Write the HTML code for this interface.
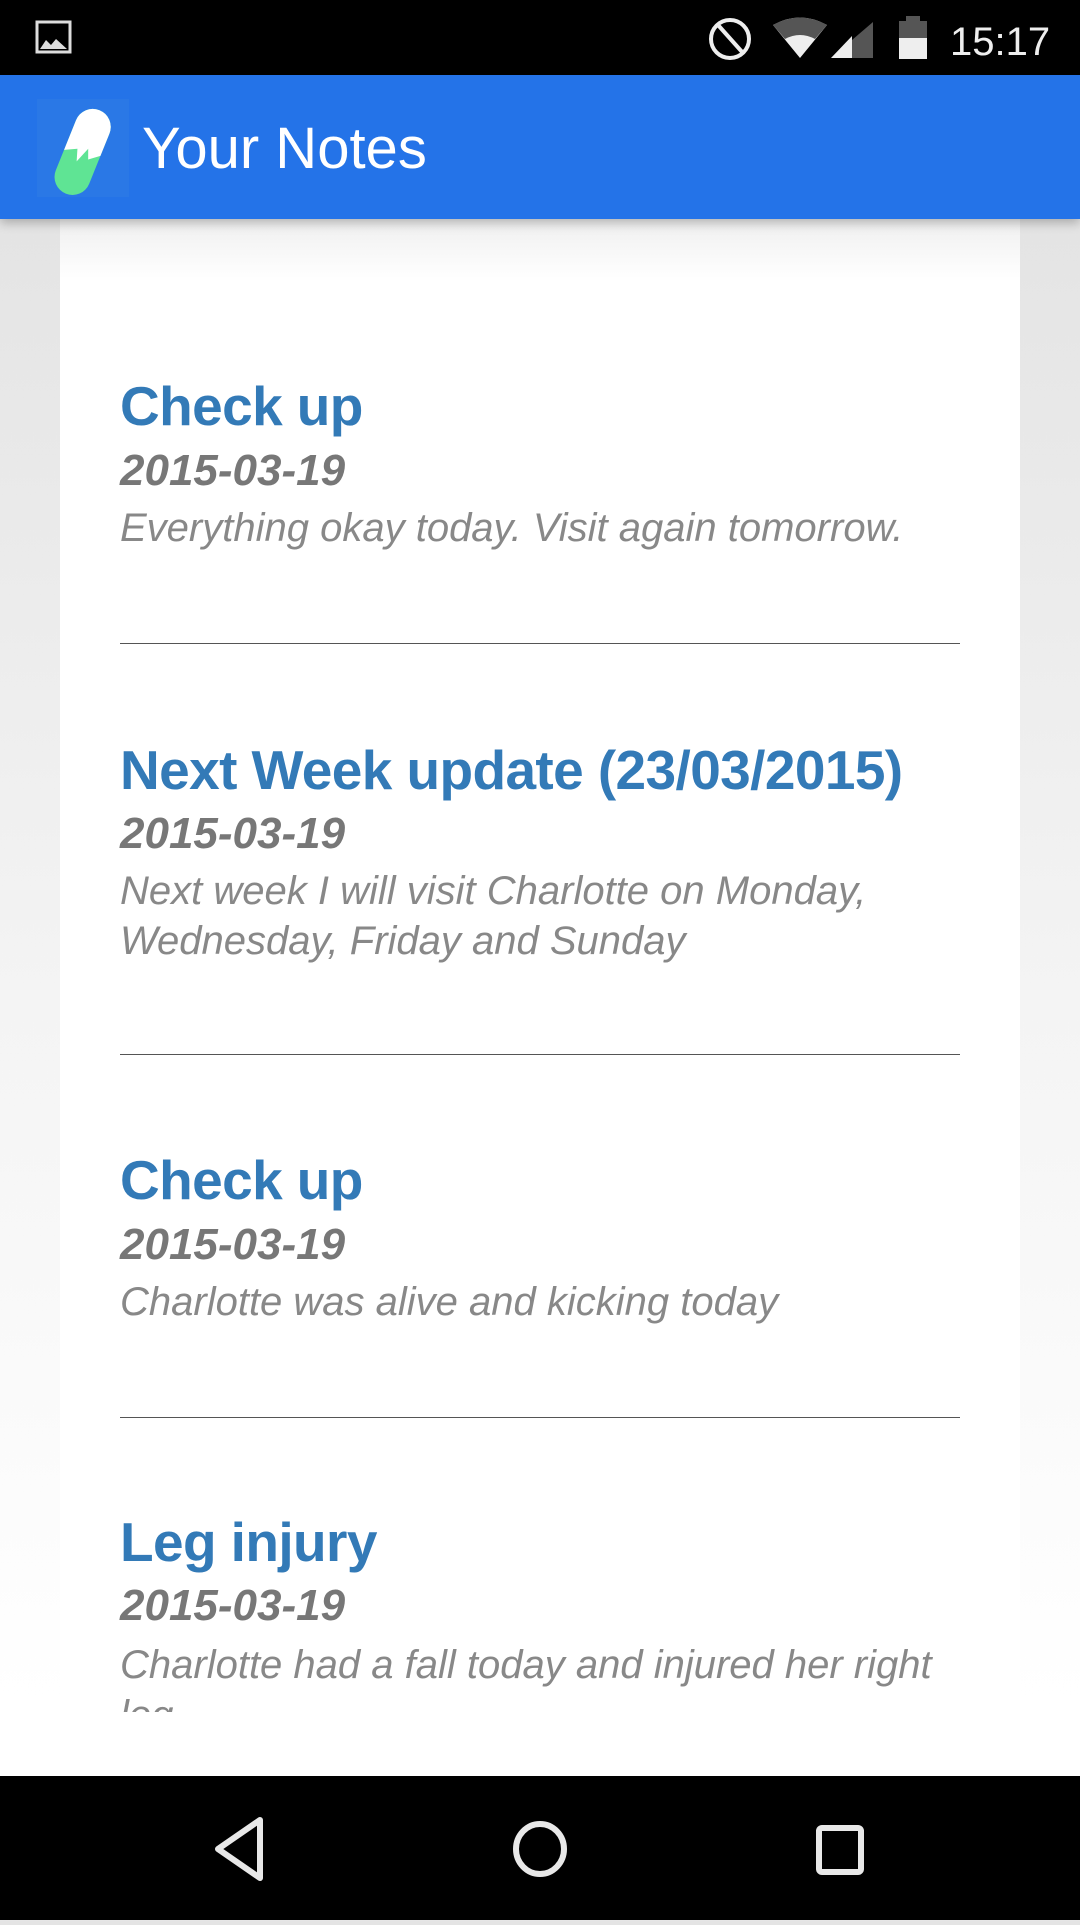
<!DOCTYPE html>
<html><head><meta charset="utf-8"><style>
*{margin:0;padding:0;box-sizing:border-box}
body{width:1080px;height:1920px;position:relative;overflow:hidden;font-family:"Liberation Sans",sans-serif;background:linear-gradient(#e4e4e4 219px,#f4f4f4 1000px,#fff 1700px)}
#status{position:absolute;left:0;top:0;width:1080px;height:75px;background:#000}
#bar{position:absolute;left:0;top:75px;width:1080px;height:144px;background:#2473E8;box-shadow:0 4px 10px rgba(0,0,0,.25);z-index:2}
#bar .t{position:absolute;left:142px;top:45px;font-size:58px;color:#fff;line-height:1}
#card{position:absolute;left:60px;top:219px;width:960px;height:1493px;background:#fff;overflow:hidden}
#card:before{content:"";position:absolute;left:0;top:0;width:100%;height:60px;background:linear-gradient(#efefef,#fff)}
.a{position:absolute;left:60px;white-space:nowrap}
.ti{font-size:55px;font-weight:bold;color:#337AB7;line-height:1;letter-spacing:-0.6px}
.d{font-size:44px;font-weight:bold;font-style:italic;color:#777;line-height:1}
.b{font-size:40px;font-style:italic;color:#888;line-height:50px;white-space:normal;width:850px}
.hr{position:absolute;left:60px;width:840px;height:1px;background:#555}
#white{position:absolute;left:0;top:1712px;width:1080px;height:64px;background:#fff}
#nav{position:absolute;left:0;top:1776px;width:1080px;height:144px;background:#000}
</style></head><body>
<div id="status">
<svg width="1080" height="75" style="position:absolute;left:0;top:0">
<rect x="37" y="22" width="33" height="30" fill="none" stroke="#ddd" stroke-width="3"/>
<path d="M40 49 L46 40 L51 45 L56 39 L67 49 Z" fill="#ddd"/>
<circle cx="730" cy="39" r="19" fill="none" stroke="#eee" stroke-width="4"/>
<line x1="718" y1="25" x2="743" y2="53" stroke="#eee" stroke-width="4"/>
<path d="M773 25 Q800 10 827 25 L800 58 Z" fill="#eee"/>
<path d="M773 25 Q800 10 827 25 L815 39 Q800 31 785 39 Z" fill="#555"/>
<path d="M831 58 L873 58 L873 22 Z" fill="#555"/>
<path d="M831 58 L852 58 L852 36 Z" fill="#eee"/>
<rect x="899" y="21" width="28" height="38" fill="#555"/>
<rect x="906" y="16" width="14" height="6" fill="#555"/>
<rect x="899" y="38" width="28" height="21" fill="#eee"/>
<text x="950" y="55" font-family="Liberation Sans" font-size="40" fill="#eee">15:17</text>
</svg>
</div>
<div id="bar">
<svg width="100" height="100" style="position:absolute;left:37px;top:24px">
<rect x="0" y="0" width="92" height="98" fill="#2a78e6"/>
<g transform="rotate(22 46 52)">
<rect x="28" y="8" width="36" height="90" rx="18" fill="#5fe494"/>
<path d="M28 26 A18 18 0 0 1 64 26 L64 50 L54 58 L50 48 L44 64 L40 52 L28 58 Z" fill="#fff"/>
</g>
</svg>
<div class="t">Your Notes</div>
</div>
<div id="card">
<div class="a ti" style="top:160px">Check up</div>
<div class="a d" style="top:230px">2015-03-19</div>
<div class="a b" style="top:284px">Everything okay today. Visit again tomorrow.</div>
<div class="hr" style="top:424px"></div>
<div class="a ti" style="top:524px">Next Week update (23/03/2015)</div>
<div class="a d" style="top:593px">2015-03-19</div>
<div class="a b" style="top:647px">Next week I will visit Charlotte on Monday, Wednesday, Friday and Sunday</div>
<div class="hr" style="top:835px"></div>
<div class="a ti" style="top:934px">Check up</div>
<div class="a d" style="top:1004px">2015-03-19</div>
<div class="a b" style="top:1058px">Charlotte was alive and kicking today</div>
<div class="hr" style="top:1198px"></div>
<div class="a ti" style="top:1296px">Leg injury</div>
<div class="a d" style="top:1365px">2015-03-19</div>
<div class="a b" style="top:1421px">Charlotte had a fall today and injured her right leg</div>
</div>
<div id="white"></div>
<div id="nav">
<svg width="1080" height="144">
<path d="M260 44 L218 73 L260 102 Z" fill="none" stroke="#e8e8e8" stroke-width="6" stroke-linejoin="round"/>
<ellipse cx="540" cy="73" rx="24" ry="25" fill="none" stroke="#e8e8e8" stroke-width="6"/>
<rect x="819" y="52" width="42" height="44" rx="3" fill="none" stroke="#e8e8e8" stroke-width="6"/>
</svg>
</div>
</body></html>
